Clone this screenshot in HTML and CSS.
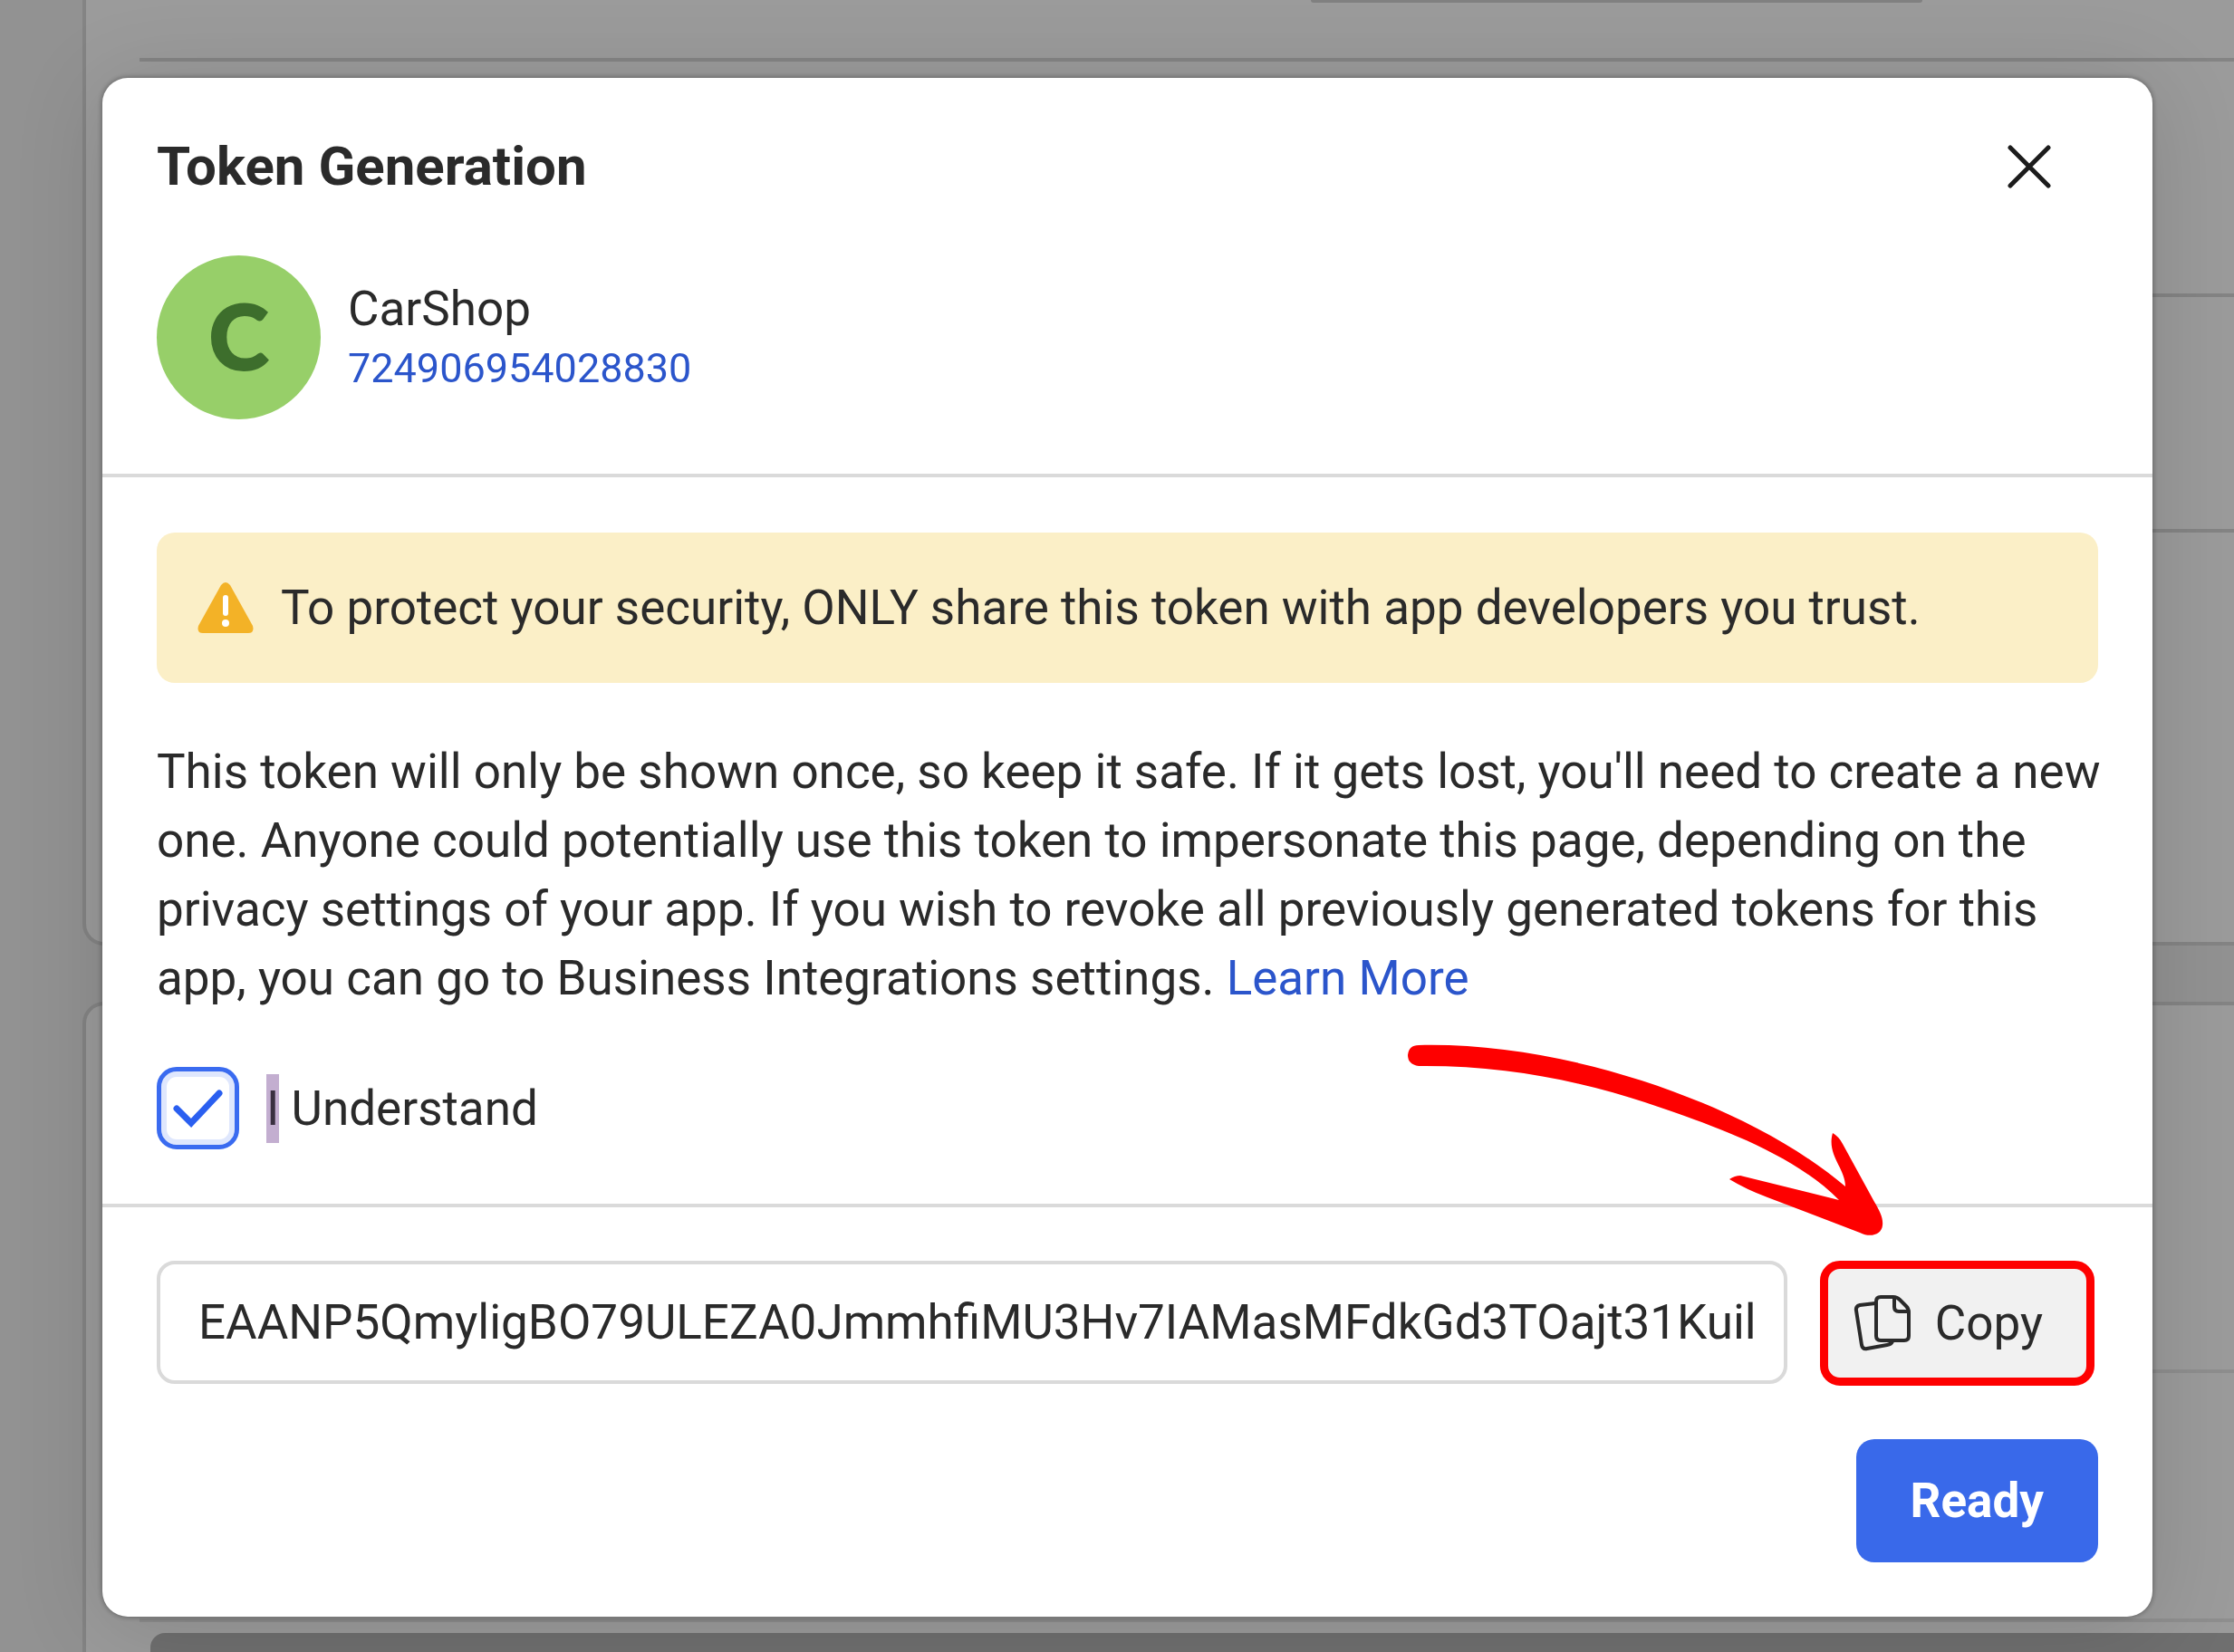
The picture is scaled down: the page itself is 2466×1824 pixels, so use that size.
FILE: index.html
```html
<!DOCTYPE html>
<html lang="en">

<head>
  <meta charset="UTF-8">
  <meta name="viewport" content="width=device-width, initial-scale=1.0">
  <title>Token Generation</title>
  <link rel="stylesheet" href="styles.css">
</head>

<body>
  <!-- settings page behind the dialog -->
  <div id="page">
    <div class="card first-card">
      <div class="page-field"></div>
      <div class="page-row"></div>
      <div class="page-row"></div>
      <div class="page-row"></div>
    </div>
    <div class="card second-card">
      <div class="page-section"></div>
      <div class="page-section tall"></div>
      <div class="page-box"></div>
    </div>
  </div>

  <div id="overlay">
    <div id="dialog" role="dialog" aria-labelledby="title">
      <div class="header">
        <div class="title-row">
          <h2 id="title">Token Generation</h2>
          <button class="close" aria-label="Close">
            <svg viewBox="0 0 48 48" width="48" height="48">
              <path d="M3 3L45 45M45 3L3 45" fill="none" stroke="#1c1c1c" stroke-width="5" stroke-linecap="round"/>
            </svg>
          </button>
        </div>
        <div class="account">
          <div class="avatar">C</div>
          <div class="account-info">
            <span class="account-name">CarShop</span>
            <a class="account-id" href="#">724906954028830</a>
          </div>
        </div>
      </div>

      <div class="content">
        <div class="alert">
          <svg viewBox="0 0 62 56" width="62" height="56">
            <path d="M26 3Q31 -3 36 3L61 48Q63 56 56 56H6Q-1 56 1 48Z" fill="#f3b227"/>
            <path d="M31 17V34" stroke="#fff" stroke-width="6" stroke-linecap="round"/>
            <circle cx="31" cy="45" r="4" fill="#fff"/>
          </svg>
          <span>To protect your security, ONLY share this token with app developers you trust.</span>
        </div>
        <p class="text">This token will only be shown once, so keep it safe. If it gets lost, you'll need to create a new one. Anyone could potentially use this token to impersonate this page, depending on the privacy settings of your app. If you wish to revoke all previously generated tokens for this app, you can go to Business Integrations settings. <a href="#">Learn More</a></p>
        <div class="agree">
          <span class="check">
            <input type="checkbox" id="understand" checked>
            <svg viewBox="0 0 91 91" width="91" height="91">
              <path d="M22 46L38 62L69 29" fill="none" stroke="#2a5ff0" stroke-width="7" stroke-linecap="round"/>
            </svg>
          </span>
          <label for="understand"><mark>I</mark> Understand</label>
        </div>
      </div>

      <div class="footer">
        <div class="token-row">
          <input type="text" id="token" aria-label="Token" value="EAANP5QmyligBO79ULEZA0JmmhfiMU3Hv7IAMasMFdkGd3TOajt31Kuil" readonly>
          <button class="copy">
            <svg viewBox="0 0 64 62" width="64" height="62" fill="none" stroke="#2a2a2a" stroke-width="4" stroke-linejoin="round" stroke-linecap="round">
              <path d="M24 9L7 11Q2 12 3 17L9 55Q10 60 15 59L37 55Q42 54 43 51"/>
              <path d="M30 2H44Q48 2 51 5L58 12Q61 15 61 19V45Q61 50 56 50H30Q25 50 25 45V7Q25 2 30 2Z"/>
              <path d="M45 3V13Q45 18 50 18H60"/>
            </svg>
            Copy
          </button>
          <svg class="arrow" viewBox="0 0 550 230" width="550" height="230">
            <path d="M25 14C190 10 390 80 496 170C496 150 475 135 482 111Q489 115 493 123L528 187C534 197 538 205 537 213C536 223 524 227 512 221L410 182Q386 173 368 162Q374 158 380 158L489 185C440 135 355 105 304 87C220 57 130 36 25 37Q13 35 13 25Q14 14 25 14Z" fill="#fe0000"/>
          </svg>
        </div>
        <button class="ready">Ready</button>
      </div>
    </div>
  </div>
</body>

</html>
```

FILE: styles.css
```css
* {
  margin: 0;
  padding: 0;
  box-sizing: border-box;
}

body {
  height: 100vh;
  overflow: hidden;
  background: #929292;
  color: #2a2a2a;
  font-family: Roboto, "Liberation Sans", sans-serif;
  font-size: 53px;
  line-height: 76px;
}

a {
  color: #2b55cb;
  text-decoration: none;
}

button,
input {
  font: inherit;
  color: inherit;
}

/* page behind */
#page {
  display: flex;
  flex-direction: column;
  gap: 62px;
  height: 100vh;
  padding-left: 91px;
}

.card {
  background: #9b9b9b;
  border: 4px solid #848484;
  border-right: none;
}

.first-card {
  border-top: none;
  border-bottom-left-radius: 24px;
  height: 1044px;
  flex: none;
  padding-left: 59px;
}

.second-card {
  border-bottom: none;
  border-top-left-radius: 24px;
  flex: 1;
  padding-left: 59px;
}

.page-field {
  height: 3px;
  margin: 0 344px 61px 1293px;
  background: #808080;
  border-radius: 0 0 8px 8px;
}

.page-row {
  height: 260px;
  border-top: 4px solid #848484;
}

.page-section {
  height: 406px;
  border-bottom: 4px solid #8e8e8e;
}

.page-section.tall {
  height: 275px;
}

.page-box {
  height: 60px;
  margin: 12px 0 0 12px;
  background: #6f6f6f;
  border-top-left-radius: 16px;
}

/* dialog */
#overlay {
  position: fixed;
  inset: 0;
  padding: 86px 90px 40px 113px;
}

#dialog {
  background: #fff;
  border-radius: 28px;
  box-shadow: 0 0 6px rgba(0, 0, 0, 0.4), 0 10px 100px rgba(0, 0, 0, 0.14);
}

.header {
  padding: 60px;
  border-bottom: 4px solid #dadada;
}

.title-row {
  display: flex;
  justify-content: space-between;
  align-items: center;
  margin-bottom: 60px;
}

#title {
  font-size: 60px;
  font-weight: 700;
}

.close {
  display: flex;
  margin-right: 52px;
  border: none;
  background: none;
}

.account {
  display: flex;
  align-items: center;
  gap: 30px;
}

.avatar {
  display: flex;
  justify-content: center;
  align-items: center;
  width: 181px;
  height: 181px;
  padding-bottom: 8px;
  border-radius: 50%;
  background: #97cf69;
  color: #3d6e2c;
  font-family: Lato, sans-serif;
  font-size: 100px;
  font-weight: 900;
  -webkit-text-stroke: 2px #3d6e2c;
}

.account-info {
  display: flex;
  flex-direction: column;
}

.account-name {
  line-height: 68px;
}

.account-id {
  font-size: 45px;
  line-height: 64px;
}

.content {
  display: flex;
  flex-direction: column;
  gap: 60px;
  padding: 61px 60px 60px;
  border-bottom: 4px solid #dadada;
}

.alert {
  display: flex;
  align-items: center;
  gap: 30px;
  padding: 45px;
  background: #fbefc7;
  border-radius: 20px;
}

.text {
  margin-right: -8px;
}

.agree {
  display: flex;
  align-items: center;
  gap: 30px;
}

.check {
  position: relative;
  display: flex;
}

.check input {
  appearance: none;
  width: 91px;
  height: 91px;
  border: 5px solid #3a6bf0;
  border-radius: 22px;
  box-shadow: inset 0 0 0 6px #dfe7fd;
}

.check svg {
  position: absolute;
  inset: 0;
  pointer-events: none;
}

mark {
  display: inline-block;
  background: #c3aed0;
  color: #3a3040;
}

.footer {
  display: flex;
  flex-direction: column;
  align-items: flex-end;
  gap: 59px;
  padding: 59px 60px 60px;
}

.token-row {
  position: relative;
  display: flex;
  gap: 36px;
  width: 100%;
}

#token {
  flex: 1;
  min-width: 0;
  height: 136px;
  padding: 0 30px 0 42px;
  border: 4px solid #dadada;
  border-radius: 20px;
  background: #fff;
}

.copy {
  display: flex;
  align-items: center;
  gap: 26px;
  height: 138px;
  margin-right: 4px;
  padding: 0 48px 0 28px;
  border: 9px solid #fe0000;
  border-radius: 22px;
  background: #f1f1f1;
}

.arrow {
  position: absolute;
  right: 225px;
  bottom: 160px;
  pointer-events: none;
}

.ready {
  height: 136px;
  padding: 0 60px;
  border: none;
  border-radius: 20px;
  background: #3969ea;
  color: #fff;
  font-weight: 700;
}
```
